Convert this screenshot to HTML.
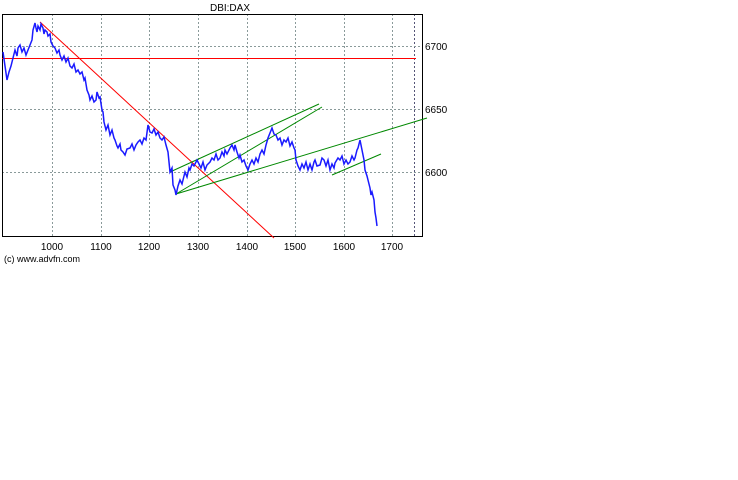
<!DOCTYPE html>
<html><head><style>
body{margin:0;background:#fff;width:738px;height:475px;overflow:hidden}
svg text{font-family:"Liberation Sans",sans-serif;font-size:10px;fill:#000}
</style></head><body>
<svg width="738" height="475" xmlns="http://www.w3.org/2000/svg">
<g stroke="#8a9a9a" stroke-width="1" stroke-dasharray="2,2">
<line x1="52.5" y1="14" x2="52.5" y2="237"/><line x1="101.5" y1="14" x2="101.5" y2="237"/>
<line x1="149.5" y1="14" x2="149.5" y2="237"/><line x1="198.5" y1="14" x2="198.5" y2="237"/>
<line x1="247.5" y1="14" x2="247.5" y2="237"/><line x1="295.5" y1="14" x2="295.5" y2="237"/>
<line x1="344.5" y1="14" x2="344.5" y2="237"/><line x1="392.5" y1="14" x2="392.5" y2="237"/>
<line x1="414.5" y1="14" x2="414.5" y2="237" stroke="#557"/>
<line x1="2" y1="46.5" x2="422" y2="46.5"/><line x1="2" y1="109.5" x2="422" y2="109.5"/>
<line x1="2" y1="172.5" x2="422" y2="172.5"/>
</g>
<rect x="2.5" y="14.5" width="420" height="222" fill="none" stroke="#000"/>
<line x1="2" y1="58.5" x2="416" y2="58.5" stroke="#f00"/>
<line x1="40" y1="22" x2="274" y2="238" stroke="#f00"/>
<g stroke="#080" stroke-width="1">
<line x1="170" y1="172" x2="319" y2="104"/>
<line x1="176" y1="194" x2="322" y2="107"/>
<line x1="176" y1="194" x2="427" y2="118"/>
<line x1="332" y1="175" x2="381" y2="154"/>
</g>
<polyline fill="none" stroke="#1a1aff" stroke-width="1.5" points="3,52 5,66 7,80 9,72 11,66 13,58 15,50 17,56 18,48 20,45 22,52 24,48 26,55 28,50 30,45 32,40 33,30 35,23 36,28 37,32 38,26 40,30 41,24 43,28 44,34 45,30 47,32 48,36 50,34 51,42 53,46 55,48 57,53 59,50 60,55 62,60 64,56 66,62 68,58 70,66 72,68 74,64 76,72 78,70 80,74 82,72 84,80 85,78 87,90 89,95 90,100 92,96 94,102 96,100 97,92 99,98 100,97 102,110 103,112 104,122 106,130 108,125 110,135 112,130 114,138 115,140 117,146 118,148 120,144 121,150 123,152 125,155 127,149 130,148 132,144 134,150 136,145 138,142 140,140 142,144 144,138 146,140 148,125 150,132 152,133 154,129 156,135 158,132 160,138 162,140 164,137 166,145 168,152 169,162 170,172 172,168 173,185 175,190 176,195 178,186 180,180 182,184 184,176 185,172 187,177 189,168 190,170 192,164 194,166 197,160 199,164 201,168 203,162 205,170 207,165 210,162 212,158 214,160 216,154 218,160 220,158 222,152 224,156 225,150 227,154 230,148 232,145 234,150 235,145 237,152 239,158 240,155 242,162 244,160 246,166 248,170 250,164 252,160 254,164 256,158 258,162 260,154 262,150 264,154 266,145 268,138 270,133 272,128 274,134 276,135 278,140 280,138 282,145 284,140 286,142 288,138 290,146 292,142 294,148 295,150 296,160 298,166 300,170 302,164 304,168 306,162 308,170 310,164 312,170 314,162 315,160 317,166 320,165 322,158 324,160 326,166 328,160 330,170 332,164 334,168 335,163 338,158 340,160 342,156 344,164 346,160 348,164 350,162 352,156 354,160 355,158 357,150 358,148 360,140 361,145 362,150 364,160 365,170 367,176 368,180 370,188 371,195 372,192 374,200 375,212 376,218 377,226"/>
<text x="230" y="11" text-anchor="middle">DBI:DAX</text>
<text x="425" y="50">6700</text><text x="425" y="113">6650</text><text x="425" y="176">6600</text>
<g text-anchor="middle">
<text x="52" y="250">1000</text><text x="101" y="250">1100</text><text x="149" y="250">1200</text>
<text x="198" y="250">1300</text><text x="247" y="250">1400</text><text x="295" y="250">1500</text>
<text x="344" y="250">1600</text><text x="392" y="250">1700</text>
</g>
<text x="4" y="262" style="font-size:9px">(c) www.advfn.com</text>
</svg>
</body></html>
